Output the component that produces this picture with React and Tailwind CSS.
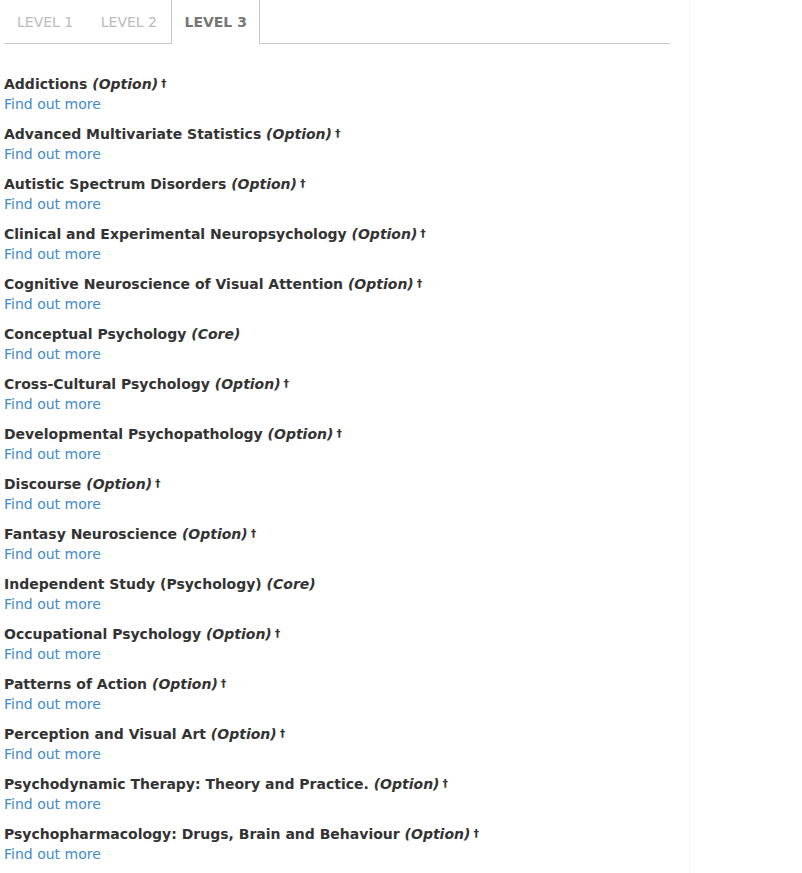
import React from 'react';

const modules = [
  { name: 'Addictions', type: 'Option', dagger: true },
  { name: 'Advanced Multivariate Statistics', type: 'Option', dagger: true },
  { name: 'Autistic Spectrum Disorders', type: 'Option', dagger: true },
  { name: 'Clinical and Experimental Neuropsychology', type: 'Option', dagger: true },
  { name: 'Cognitive Neuroscience of Visual Attention', type: 'Option', dagger: true },
  { name: 'Conceptual Psychology', type: 'Core', dagger: false },
  { name: 'Cross-Cultural Psychology', type: 'Option', dagger: true },
  { name: 'Developmental Psychopathology', type: 'Option', dagger: true },
  { name: 'Discourse', type: 'Option', dagger: true },
  { name: 'Fantasy Neuroscience', type: 'Option', dagger: true },
  { name: 'Independent Study (Psychology)', type: 'Core', dagger: false },
  { name: 'Occupational Psychology', type: 'Option', dagger: true },
  { name: 'Patterns of Action', type: 'Option', dagger: true },
  { name: 'Perception and Visual Art', type: 'Option', dagger: true },
  { name: 'Psychodynamic Therapy: Theory and Practice.', type: 'Option', dagger: true },
  { name: 'Psychopharmacology: Drugs, Brain and Behaviour', type: 'Option', dagger: true },
];

const tabs = ['Level 1', 'Level 2', 'Level 3'];

const App = () => {
  return (
    <div className="min-h-screen bg-white" style={{ fontFamily: '"DejaVu Sans", Verdana, sans-serif' }}>
      <div className="w-[690px] min-h-screen border-r border-[#f9f9f9] pl-1">
        <ul className="flex gap-[1.5px] w-[666px] h-11 border-b border-[#c8c8c8]">
          {tabs.map((tab, i) => {
            const active = i === 2;
            return (
              <li
                key={tab}
                className={
                  active
                    ? 'flex items-center px-[12px] -mb-px bg-white border-x border-[#c8c8c8] text-[#777] font-bold text-sm uppercase'
                    : 'flex items-center px-[12px] border-x border-transparent text-[#bbb] text-sm uppercase'
                }
              >
                {tab}
              </li>
            );
          })}
        </ul>

        <div className="pt-[30px]">
          {modules.map((m) => (
            <div key={m.name} className="mb-[10px] text-sm leading-5">
              <div className="font-bold text-[#333]">
                {m.name} <em>({m.type})</em>
                {m.dagger && <span className="ml-[3px] text-[11px] align-top">†</span>}
              </div>
              <a href="#" className="text-[#428bca]">Find out more</a>
            </div>
          ))}
        </div>
      </div>
    </div>
  );
};

export default App;
